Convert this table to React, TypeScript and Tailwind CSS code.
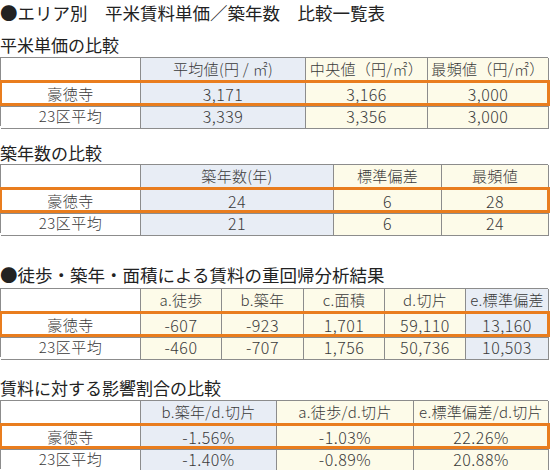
import React from 'react';

// cell background tones
const BLUE = 'bg-[#e8edf5]';
const YELLOW = 'bg-[#fdfbe9]';
const WHITE = 'bg-white';

interface CompareTable {
  cols: string; // grid template class
  bgs: string[]; // background per column (after the label column)
  headers: string[];
  rows: { label: string; values: string[]; highlight?: boolean }[];
}

const tables: { title: string; table: CompareTable }[] = [
  {
    title: '平米単価の比較',
    table: {
      cols: 'grid-cols-[140px_165px_122px_121px]',
      bgs: [BLUE, YELLOW, YELLOW],
      headers: ['平均値(円 / ㎡)', '中央値（円/㎡）', '最頻値（円/㎡）'],
      rows: [
        { label: '豪徳寺', values: ['3,171', '3,166', '3,000'], highlight: true },
        { label: '23区平均', values: ['3,339', '3,356', '3,000'] },
      ],
    },
  },
  {
    title: '築年数の比較',
    table: {
      cols: 'grid-cols-[140px_193px_108px_107px]',
      bgs: [BLUE, YELLOW, YELLOW],
      headers: ['築年数(年)', '標準偏差', '最頻値'],
      rows: [
        { label: '豪徳寺', values: ['24', '6', '28'], highlight: true },
        { label: '23区平均', values: ['21', '6', '24'] },
      ],
    },
  },
];

const regression: CompareTable = {
  cols: 'grid-cols-[140px_81px_82px_81px_81px_83px]',
  bgs: [YELLOW, YELLOW, YELLOW, YELLOW, BLUE],
  headers: ['a.徒歩', 'b.築年', 'c.面積', 'd.切片', 'e.標準偏差'],
  rows: [
    { label: '豪徳寺', values: ['-607', '-923', '1,701', '59,110', '13,160'], highlight: true },
    { label: '23区平均', values: ['-460', '-707', '1,756', '50,736', '10,503'] },
  ],
};

const ratio: CompareTable = {
  cols: 'grid-cols-[140px_136px_137px_135px]',
  bgs: [BLUE, YELLOW, YELLOW],
  headers: ['b.築年/d.切片', 'a.徒歩/d.切片', 'e.標準偏差/d.切片'],
  rows: [
    { label: '豪徳寺', values: ['-1.56%', '-1.03%', '22.26%'], highlight: true },
    { label: '23区平均', values: ['-1.40%', '-0.89%', '20.88%'] },
  ],
};

const Table: React.FC<{ t: CompareTable }> = ({ t }) => (
  <div className="w-[548px] border-t border-l border-[#8c8c8c] text-[#3a3a3a] font-light">
    {/* Header */}
    <div className={`grid ${t.cols} h-6`}>
      <div className={`${WHITE} border-r border-b border-[#8c8c8c]`} />
      {t.headers.map((h, i) => (
        <div
          key={h}
          className={`${t.bgs[i]} border-r border-b border-[#8c8c8c] flex items-center justify-center text-[15px] tracking-[0.3px] whitespace-nowrap`}
        >
          {h}
        </div>
      ))}
    </div>
    {/* Rows */}
    {t.rows.map((r) => (
      <div
        key={r.label}
        className={`grid ${t.cols} h-[22px] ${
          r.highlight ? 'relative z-10 outline-[3px] outline-solid outline-[#e97d1e] -outline-offset-1' : ''
        }`}
      >
        <div className={`${WHITE} border-r border-b border-[#8c8c8c] flex items-center justify-center text-[15px] tracking-[0.5px]`}>
          {r.label}
        </div>
        {r.values.map((v, i) => (
          <div
            key={i}
            className={`${t.bgs[i]} border-r border-b border-[#8c8c8c] flex items-center justify-center text-[16px] tracking-[0.5px]`}
          >
            {v}
          </div>
        ))}
      </div>
    ))}
  </div>
);

export default function App() {
  return (
    <div
      className="w-[550px] h-[470px] bg-white text-[#222] overflow-hidden"
      style={{ fontFamily: '"Noto Sans CJK JP", "Noto Sans", sans-serif' }}
    >
      <h1 className="text-[17.5px] leading-[25px] whitespace-nowrap">
        ●エリア別　平米賃料単価／築年数　比較一覧表
      </h1>

      <h2 className="text-[17px] leading-5 mt-[10px] mb-[2px]">{tables[0].title}</h2>
      <Table t={tables[0].table} />

      <h2 className="text-[17px] leading-5 mt-[17px] mb-[1px]">{tables[1].title}</h2>
      <Table t={tables[1].table} />

      <h2 className="text-[17.5px] leading-5 mt-[32px] mb-[3px] whitespace-nowrap">
        ●徒歩・築年・面積による賃料の重回帰分析結果
      </h2>
      <Table t={regression} />

      <h2 className="text-[17px] leading-5 mt-[21px] mb-[2px]">賃料に対する影響割合の比較</h2>
      <Table t={ratio} />
    </div>
  );
}
